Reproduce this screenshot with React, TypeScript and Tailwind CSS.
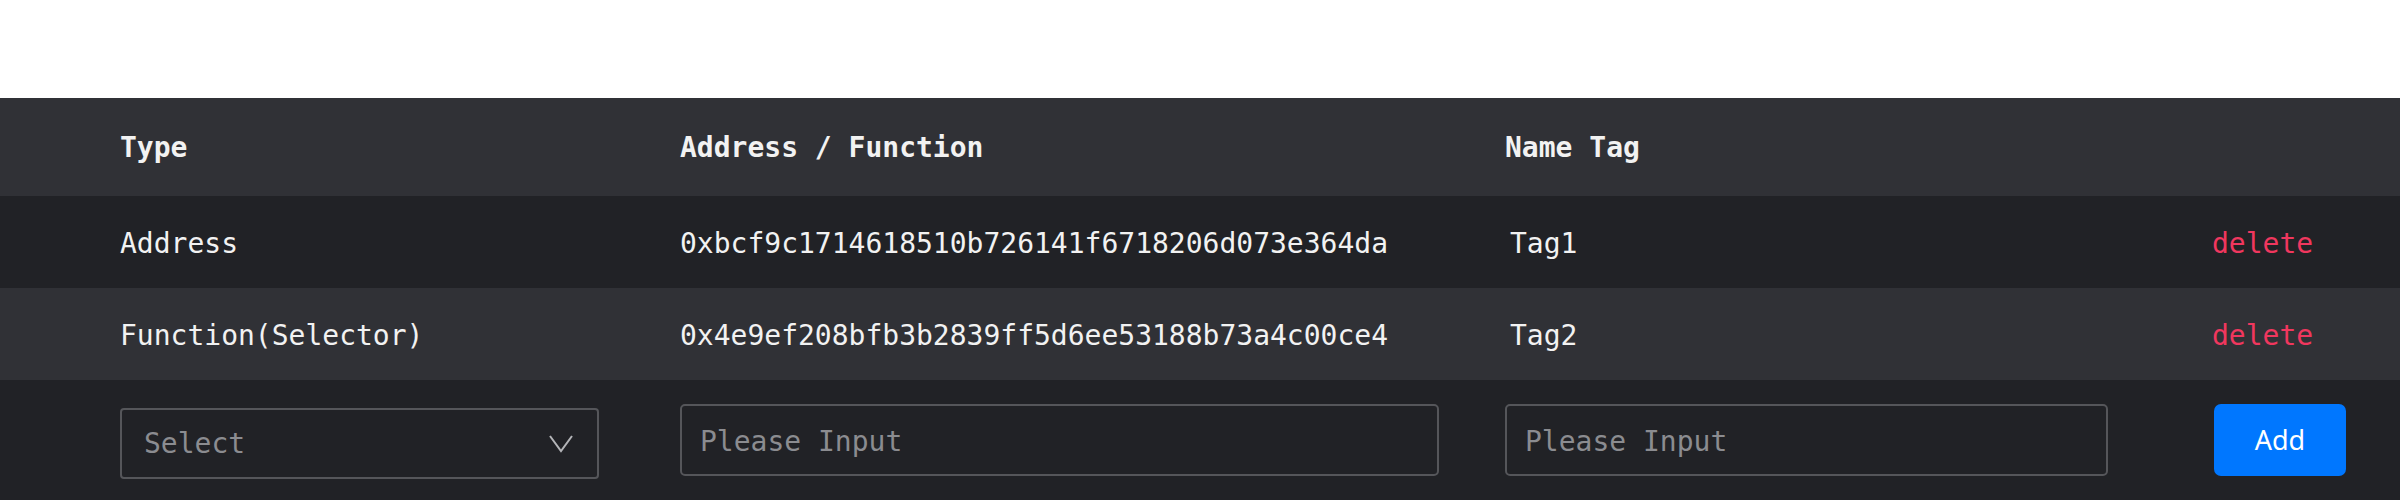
import React from "react";

type Tag = {
  type: string;
  value: string;
  name: string;
};

const tags: Tag[] = [
  { type: "Address", value: "0xbcf9c1714618510b726141f6718206d073e364da", name: "Tag1" },
  { type: "Function(Selector)", value: "0x4e9ef208bfb3b2839ff5d6ee53188b73a4c00ce4", name: "Tag2" },
];

const mono = "font-['DejaVu_Sans_Mono','Liberation_Mono',monospace]";
const grid = "grid grid-cols-[560px_825px_706px_1fr] items-center pl-[120px]";

function ChevronDown() {
  return (
    <svg width="24" height="18" viewBox="0 0 24 18" fill="none">
      <polyline points="1,1 12,16 23,1" stroke="#b4b5b8" strokeWidth="2" strokeLinejoin="miter" />
    </svg>
  );
}

export default function App() {
  return (
    <div className={`min-h-screen bg-white pt-[98px] text-[28px] text-[#f2f2f2] ${mono}`}>
      <div className={`${grid} h-[98px] bg-[#303136] pt-[2px] font-bold`}>
        <div>Type</div>
        <div>Address / Function</div>
        <div>Name Tag</div>
        <div />
      </div>

      {tags.map((t, i) => (
        <div key={t.value} className={`${grid} h-[92px] pt-[3px] ${i % 2 === 0 ? "bg-[#212226]" : "bg-[#303136]"}`}>
          <div>{t.type}</div>
          <div>{t.value}</div>
          <div className="pl-[5px]">{t.name}</div>
          <div className="pl-[1px] text-[#f0375e]">delete</div>
        </div>
      ))}

      <div className={`${grid} h-[120px] bg-[#212226]`}>
        <div>
          <div className="flex h-[71px] w-[479px] translate-y-[3px] items-center justify-between rounded-[4px] border-2 border-[#55565a] pl-[22px] pr-[24px] pt-[2px] text-[#8b8c90]">
            <span>Select</span>
            <ChevronDown />
          </div>
        </div>
        <div>
          <input
            className="h-[72px] w-[759px] rounded-[5px] border-2 border-[#55565a] bg-transparent px-[18px] pt-[2px] text-[#f2f2f2] outline-none placeholder:text-[#8b8c90]"
            placeholder="Please Input"
          />
        </div>
        <div>
          <input
            className="h-[72px] w-[603px] rounded-[5px] border-2 border-[#55565a] bg-transparent px-[18px] pt-[2px] text-[#f2f2f2] outline-none placeholder:text-[#8b8c90]"
            placeholder="Please Input"
          />
        </div>
        <div>
          <button className="ml-[3px] h-[72px] w-[132px] rounded-[7px] bg-[#0077ff] font-['Noto_Sans',sans-serif] text-[27px] text-white">
            Add
          </button>
        </div>
      </div>
    </div>
  );
}
